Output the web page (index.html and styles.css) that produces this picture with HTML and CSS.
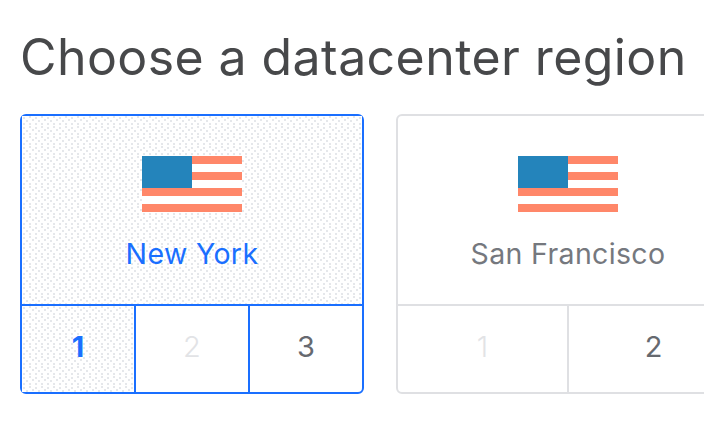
FILE: index.html
```html
<!DOCTYPE html>
<html lang="en">
<head>
  <meta charset="UTF-8" />
  <meta name="viewport" content="width=device-width, initial-scale=1.0"/>
  <title>Choose a datacenter region</title>
  <link rel="stylesheet" href="styles.css">
</head>
<body>
  <h1>Choose a datacenter region</h1>
  <div class="regions">
    <div class="region selected">
      <div class="region-head">
        <svg class="flag" width="100" height="56" viewBox="0 0 100 56">
          <rect width="100" height="56" fill="#fff"/>
          <rect width="100" height="8" fill="#ff8769"/>
          <rect y="16" width="100" height="8" fill="#ff8769"/>
          <rect y="32" width="100" height="8" fill="#ff8769"/>
          <rect y="48" width="100" height="8" fill="#ff8769"/>
          <rect width="50" height="32" fill="#2484bb"/>
        </svg>
        <div class="region-name">New York</div>
      </div>
      <div class="options">
        <div class="option active">1</div>
        <div class="option disabled">2</div>
        <div class="option">3</div>
      </div>
    </div>
    <div class="region">
      <div class="region-head">
        <svg class="flag" width="100" height="56" viewBox="0 0 100 56">
          <rect width="100" height="56" fill="#fff"/>
          <rect width="100" height="8" fill="#ff8769"/>
          <rect y="16" width="100" height="8" fill="#ff8769"/>
          <rect y="32" width="100" height="8" fill="#ff8769"/>
          <rect y="48" width="100" height="8" fill="#ff8769"/>
          <rect width="50" height="32" fill="#2484bb"/>
        </svg>
        <div class="region-name">San Francisco</div>
      </div>
      <div class="options">
        <div class="option disabled">1</div>
        <div class="option">2</div>
      </div>
    </div>
  </div>
</body>
</html>
```

FILE: styles.css
```css
html, body {
  height: 100%;
}

body {
  margin: 0;
  padding: 0 0 0 20px;
  background: #fff;
  font-family: Inter, Lato, sans-serif;
  overflow: hidden;
}

h1 {
  margin: 0;
  height: 114px;
  box-sizing: border-box;
  padding-top: 26px;
  font-size: 50px;
  line-height: 62px;
  font-weight: 400;
  letter-spacing: 0.42px;
  color: #47484a;
  white-space: nowrap;
}

.regions {
  display: flex;
  gap: 32px;
  width: 720px;
}

.region {
  flex: none;
  width: 344px;
  height: 280px;
  box-sizing: border-box;
  border: 2px solid #dfe0e3;
  border-radius: 6px;
  color: #75787e;
}

.region-head {
  height: 190px;
  box-sizing: border-box;
  padding-top: 40px;
  text-align: center;
  border-bottom: 2px solid #dfe0e3;
}

.flag {
  display: block;
  margin: 0 auto;
}

.region-name {
  margin-top: 20px;
  font-size: 28.5px;
  line-height: 44px;
  font-weight: 400;
  letter-spacing: 0.35px;
}

.options {
  display: flex;
  height: 86px;
}

.option {
  flex: 1;
  box-sizing: border-box;
  border-right: 2px solid #dfe0e3;
  text-align: center;
  font-size: 29px;
  line-height: 82px;
  font-weight: 400;
  color: #66696f;
}

.option:last-child {
  border-right: none;
}

.option.disabled {
  color: #e2e3e6;
  font-weight: 300;
}

/* selected card */
.selected {
  border-color: #1a6fff;
  color: #1a6fff;
}

.selected .region-head,
.selected .option {
  border-color: #1a6fff;
}

.selected .option {
  box-sizing: content-box;
}

.selected .region-head,
.selected .option.active {
  background-color: #fff;
  background-image:
    radial-gradient(circle at 2px 2px, #dcdfe4 0.6px, transparent 1px),
    radial-gradient(circle at 8px 1px, #dcdfe4 0.6px, transparent 1px),
    radial-gradient(circle at 5px 5px, #dcdfe4 0.6px, transparent 1px),
    radial-gradient(circle at 11px 4px, #dcdfe4 0.6px, transparent 1px),
    radial-gradient(circle at 2px 8px, #dcdfe4 0.6px, transparent 1px),
    radial-gradient(circle at 8px 8px, #dcdfe4 0.6px, transparent 1px);
  background-size: 12px 10px;
}

.selected .region-name {
  color: #1a6fff;
}

.option.active {
  color: #1a6fff;
  font-weight: 700;
}
```
